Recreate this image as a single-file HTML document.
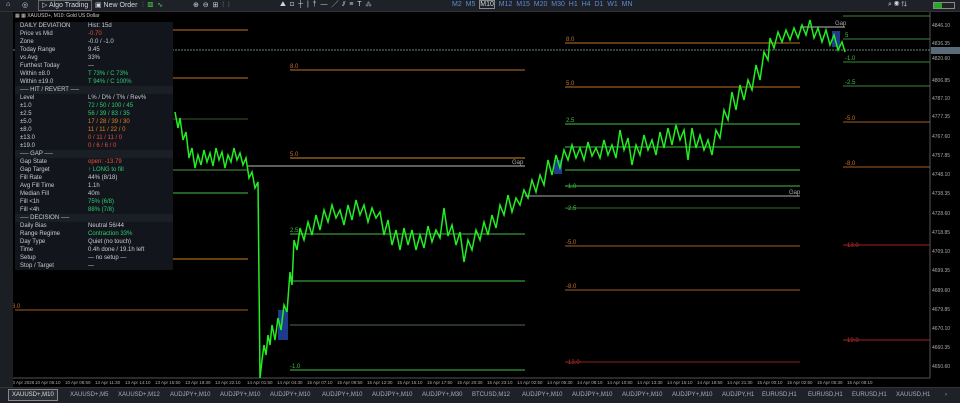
<!DOCTYPE html>
<html><head><meta charset="utf-8"><style>
*{margin:0;padding:0;box-sizing:border-box}
body{width:960px;height:403px;background:#000;overflow:hidden;font-family:"Liberation Sans",sans-serif;position:relative}
#tb{position:absolute;left:0;top:0;width:960px;height:12px;background:#1e2228;border-bottom:1px solid #333}
#tb span{position:absolute;top:1px;font-size:7px;color:#cfd6e0}
#side{position:absolute;left:0;top:12px;width:13px;height:375px;background:#1b1e23}
#panel{position:absolute;left:15px;top:22px;width:158px;height:248px;background:#12161c;font-size:6px;color:#c8ccd2}
#panel div{height:8px;line-height:8px;position:relative;padding-left:5px}
#panel b{font-weight:normal;position:absolute;left:73px}
.sec{background:#1a1e25}
.g{color:#2ecc71}.r{color:#e74c3c}.o{color:#e67e22}.y{color:#c9a227}
#tabs{position:absolute;left:0;top:387px;width:960px;height:16px;background:#1e2228;border-top:1px solid #333}
#tabs span{position:absolute;top:4px;font-size:6px;color:#aab}
</style></head><body>
<svg width="960" height="403" style="position:absolute;left:0;top:0" font-family="Liberation Sans" font-size="6">
<rect x="13" y="12" width="917" height="366" fill="#000"/>
<line x1="930" y1="12" x2="930" y2="378" stroke="#555"/>
<line x1="13" y1="378" x2="930" y2="378" stroke="#555"/>
<g stroke-width="1">
<line x1="15" y1="30" x2="248" y2="30" stroke="#c0722a"/>
<line x1="13" y1="50" x2="930" y2="50" stroke="#6a8a7a" stroke-dasharray="2,1"/>
<line x1="15" y1="78" x2="248" y2="78" stroke="#c0722a"/>
<line x1="15" y1="119" x2="248" y2="119" stroke="#3a5a2a"/>
<line x1="15" y1="170" x2="248" y2="170" stroke="#4c9a3c"/>
<line x1="15" y1="193" x2="248" y2="193" stroke="#3fbf3f"/>
<line x1="15" y1="259" x2="248" y2="259" stroke="#c8821a"/>
<line x1="15" y1="310" x2="248" y2="310" stroke="#a06020"/>
<line x1="290" y1="70" x2="525" y2="70" stroke="#c0722a"/>
<line x1="290" y1="158" x2="525" y2="158" stroke="#d08a2a"/>
<line x1="248" y1="166" x2="525" y2="166" stroke="#bbb"/>
<line x1="290" y1="234" x2="525" y2="234" stroke="#3fbf3f"/>
<line x1="290" y1="281" x2="525" y2="281" stroke="#3fbf3f"/>
<line x1="290" y1="325" x2="525" y2="325" stroke="#556655"/>
<line x1="290" y1="370" x2="525" y2="370" stroke="#3fbf3f"/>
<line x1="565" y1="43" x2="800" y2="43" stroke="#c0722a"/>
<line x1="565" y1="87" x2="800" y2="87" stroke="#c0722a"/>
<line x1="565" y1="124" x2="800" y2="124" stroke="#3fbf3f"/>
<line x1="565" y1="147" x2="800" y2="147" stroke="#3fbf3f"/>
<line x1="565" y1="170" x2="800" y2="170" stroke="#3fbf3f"/>
<line x1="565" y1="186" x2="800" y2="186" stroke="#3fbf3f"/>
<line x1="525" y1="196" x2="800" y2="196" stroke="#aaa"/>
<line x1="565" y1="208" x2="800" y2="208" stroke="#2e6e2e"/>
<line x1="565" y1="246" x2="800" y2="246" stroke="#a06020"/>
<line x1="565" y1="290" x2="800" y2="290" stroke="#a06020"/>
<line x1="565" y1="362" x2="800" y2="362" stroke="#8a2020"/>
<line x1="843" y1="16" x2="930" y2="16" stroke="#3a8a3a"/>
<line x1="800" y1="27" x2="845" y2="27" stroke="#bbb"/>
<line x1="843" y1="39" x2="930" y2="39" stroke="#3a8a3a"/>
<line x1="843" y1="62" x2="930" y2="62" stroke="#3a8a3a"/>
<line x1="843" y1="86" x2="930" y2="86" stroke="#3a8a3a"/>
<line x1="843" y1="122" x2="930" y2="122" stroke="#a06020"/>
<line x1="843" y1="167" x2="930" y2="167" stroke="#a06020"/>
<line x1="843" y1="245" x2="930" y2="245" stroke="#a02020"/>
<line x1="843" y1="340" x2="930" y2="340" stroke="#a02020"/>
</g>
<g fill="#c0722a"><text x="290" y="68">8.0</text><text x="290" y="156">5.0</text><text x="566" y="41">8.0</text><text x="566" y="85">5.0</text><text x="566" y="244">-5.0</text><text x="566" y="288">-8.0</text><text x="845" y="120">-5.0</text><text x="845" y="165">-8.0</text><text x="10" y="308">-8.0</text></g>
<g fill="#3fbf3f"><text x="290" y="232">2.5</text><text x="290" y="368">-1.0</text><text x="566" y="122">2.5</text><text x="566" y="188">-1.0</text><text x="566" y="210">-2.5</text><text x="845" y="37">5</text><text x="845" y="60">-1.0</text><text x="845" y="84">-2.5</text></g>
<g fill="#c03030"><text x="566" y="364">-13.0</text><text x="845" y="247">-13.0</text><text x="845" y="342">-19.0</text></g>
<g fill="#aaa"><text x="512" y="164">Gap</text><text x="789" y="194">Gap</text><text x="835" y="25">Gap</text></g>
<rect x="278" y="310" width="10" height="30" fill="#1e3a8a"/>
<rect x="554" y="160" width="8" height="14" fill="#1e3a8a"/>
<rect x="832" y="31" width="8" height="16" fill="#1e3a8a"/>
<polyline fill="none" stroke="#22ee22" stroke-width="1.5" points="175,112 178,128 180,118 183,140 186,132 189,158 192,148 195,168 198,155 201,165 204,150 207,162 210,153 213,166 216,148 219,160 222,152 225,168 228,155 231,162 234,148 237,160 240,153 243,165 246,158 249,178 252,172 255,188 258,182 260,378 262,360 264,345 266,355 268,335 270,345 272,325 275,340 278,318 281,330 284,305 287,312 290,272 292,285 294,240 297,250 300,228 304,240 308,222 312,235 316,215 320,230 324,210 328,222 332,205 336,218 340,210 344,225 348,205 352,220 356,200 360,215 364,205 368,222 372,208 376,218 380,212 384,235 388,220 392,245 396,230 400,250 404,228 408,245 412,230 416,250 420,235 424,248 428,226 432,242 436,230 440,238 444,208 448,236 452,225 456,245 460,232 464,262 468,240 472,250 476,230 480,240 484,222 488,235 492,215 496,228 500,205 504,215 508,195 512,212 516,198 520,205 524,190 528,198 532,180 536,192 540,175 544,185 548,160 552,175 556,155 560,168 564,150 568,160 572,145 576,158 580,148 584,160 588,142 592,156 596,148 600,158 604,140 608,155 612,145 616,158 620,130 624,150 628,138 632,165 636,145 640,155 644,135 648,150 652,140 656,155 660,132 664,148 668,128 672,145 676,125 680,140 684,130 688,160 692,128 696,148 700,135 704,150 708,140 712,155 716,130 720,138 724,110 728,120 732,92 736,110 740,85 744,100 748,80 752,90 756,65 760,80 764,52 768,60 770,38 774,48 778,32 782,42 786,30 790,40 794,28 798,38 802,25 806,35 810,20 814,38 818,28 822,42 826,30 830,45 834,35 838,50 842,42 845,52"/>
<g fill="#aaa" font-size="5">
<text x="932" y="27">4846.10</text><text x="932" y="45">4836.35</text><text x="932" y="60">4820.60</text><text x="932" y="82">4806.85</text><text x="932" y="100">4787.10</text><text x="932" y="118">4777.35</text><text x="932" y="138">4767.60</text><text x="932" y="157">4757.85</text><text x="932" y="176">4748.10</text><text x="932" y="195">4738.35</text><text x="932" y="215">4728.60</text><text x="932" y="234">4718.85</text><text x="932" y="253">4709.10</text><text x="932" y="272">4699.35</text><text x="932" y="292">4689.60</text><text x="932" y="311">4679.85</text><text x="932" y="330">4670.10</text><text x="932" y="349">4660.35</text><text x="932" y="368">4650.60</text>
</g>
<rect x="931" y="47" width="29" height="7" fill="#5a6a78"/>
<g fill="#aaa" font-size="4.5">
<text x="10" y="384">10 Apr 2026</text><text x="35" y="384">10 Apr 06:10</text><text x="65" y="384">10 Apr 08:50</text><text x="95" y="384">13 Apr 11:30</text><text x="125" y="384">13 Apr 14:10</text><text x="155" y="384">13 Apr 16:50</text><text x="185" y="384">13 Apr 19:30</text><text x="215" y="384">13 Apr 22:10</text><text x="247" y="384">14 Apr 01:50</text><text x="277" y="384">14 Apr 04:30</text><text x="307" y="384">15 Apr 07:10</text><text x="337" y="384">15 Apr 09:50</text><text x="367" y="384">15 Apr 12:30</text><text x="397" y="384">15 Apr 15:10</text><text x="427" y="384">15 Apr 17:50</text><text x="457" y="384">15 Apr 20:30</text><text x="487" y="384">15 Apr 23:10</text><text x="517" y="384">14 Apr 02:50</text><text x="547" y="384">14 Apr 05:30</text><text x="577" y="384">14 Apr 08:10</text><text x="607" y="384">14 Apr 10:50</text><text x="637" y="384">14 Apr 13:30</text><text x="667" y="384">14 Apr 16:10</text><text x="697" y="384">14 Apr 18:50</text><text x="727" y="384">14 Apr 21:30</text><text x="757" y="384">15 Apr 00:10</text><text x="787" y="384">15 Apr 02:50</text><text x="817" y="384">15 Apr 05:30</text><text x="847" y="384">15 Apr 08:10</text>
</g>
</svg>
<div id="tb">
<span style="left:6px">⌂</span><span style="left:22px">◎</span><span style="left:38px;border:1px solid #666;padding:0 3px;top:0;height:11px;line-height:10px">▷ Algo Trading</span><span style="left:95px">▣ New Order</span>
<span style="left:142px;color:#4c4">⫶ &nbsp;▥ &nbsp;∿</span><span style="left:193px">⊕ &nbsp;⊖ &nbsp;⊞ &nbsp;⫶ &nbsp;⫶</span><span style="left:280px">⛰ &nbsp;⊡ &nbsp;┼ &nbsp;| &nbsp;† &nbsp;— &nbsp;╱ &nbsp;⫽ &nbsp;≡ &nbsp;T &nbsp;⁂</span>
<span style="left:452px;color:#5b8bd0">M2 &nbsp;M5 &nbsp;<span style="position:static;border:1px solid #888">M10</span> &nbsp;M12 &nbsp;M15 &nbsp;M20 &nbsp;M30 &nbsp;H1 &nbsp;H4 &nbsp;D1 &nbsp;W1 &nbsp;MN</span>
<span style="left:888px">⌕ ◉ ⇅</span><span style="left:933px;width:22px;height:7px;border:1px solid #888;top:2px;background:linear-gradient(90deg,#2a2 40%,#222 40%)"></span>
</div>
<div id="side"></div>
<div style="position:absolute;left:15px;top:12px;font-size:5px;color:#ccc;line-height:9px">▦ ▦ XAUUSD+, M10: Gold US Dollar</div>
<div id="panel">
<div>DAILY DEVIATION<b>Hist: 15d</b></div>
<div>Price vs Mid<b class="r">-0.70</b></div>
<div>Zone<b>-0.0 / -1.0</b></div>
<div>Today Range<b>9.45</b></div>
<div>vs Avg<b>33%</b></div>
<div>Furthest Today<b>—</b></div>
<div>Within ±8.0<b class="g">T 73% / C 73%</b></div>
<div>Within ±19.0<b class="g">T 94% / C 100%</b></div>
<div class="sec">── HIT / REVERT ──</div>
<div>Level<b>L% / D% / T% / Rev%</b></div>
<div>±1.0<b class="g">72 / 50 / 100 / 45</b></div>
<div>±2.5<b class="g">56 / 39 / 83 / 35</b></div>
<div>±5.0<b class="o">17 / 28 / 39 / 30</b></div>
<div>±8.0<b class="o">11 / 11 / 22 / 0</b></div>
<div>±13.0<b class="r">0 / 11 / 11 / 0</b></div>
<div>±19.0<b class="r">0 / 6 / 6 / 0</b></div>
<div class="sec">── GAP ──</div>
<div>Gap State<b class="r">open: -13.79</b></div>
<div>Gap Target<b class="g">↑ LONG to fill</b></div>
<div>Fill Rate<b>44% (8/18)</b></div>
<div>Avg Fill Time<b>1.1h</b></div>
<div>Median Fill<b>40m</b></div>
<div>Fill &lt;1h<b class="g">75% (6/8)</b></div>
<div>Fill &lt;4h<b class="g">88% (7/8)</b></div>
<div class="sec">── DECISION ──</div>
<div>Daily Bias<b>Neutral 56/44</b></div>
<div>Range Regime<b class="g">Contraction 33%</b></div>
<div>Day Type<b>Quiet (no touch)</b></div>
<div>Time<b>0.4h done / 19.1h left</b></div>
<div>Setup<b>— no setup —</b></div>
<div>Stop / Target<b>—</b></div>
</div>
<div id="tabs">
<span style="left:8px;top:1px;border:1px solid #888;background:#2a2f36;padding:2px 3px;color:#ddd">XAUUSD+,M10</span><span style="left:70px">XAUUSD+,M5</span><span style="left:118px">XAUUSD+,M12</span><span style="left:170px">AUDJPY+,M10</span><span style="left:220px">AUDJPY+,M10</span><span style="left:270px">AUDJPY+,M10</span><span style="left:322px">AUDJPY+,M10</span><span style="left:372px">AUDJPY+,M10</span><span style="left:422px">AUDJPY+,M30</span><span style="left:472px">BTCUSD,M12</span><span style="left:522px">AUDJPY+,M10</span><span style="left:572px">AUDJPY+,M10</span><span style="left:622px">AUDJPY+,M10</span><span style="left:672px">AUDJPY+,M10</span><span style="left:722px">AUDJPY,H1</span><span style="left:762px">EURUSD,H1</span><span style="left:808px">EURUSD,H1</span><span style="left:852px">EURUSD,H1</span><span style="left:896px">XAUUSD,H1</span><span style="left:945px">›</span>
</div>
</body></html>
